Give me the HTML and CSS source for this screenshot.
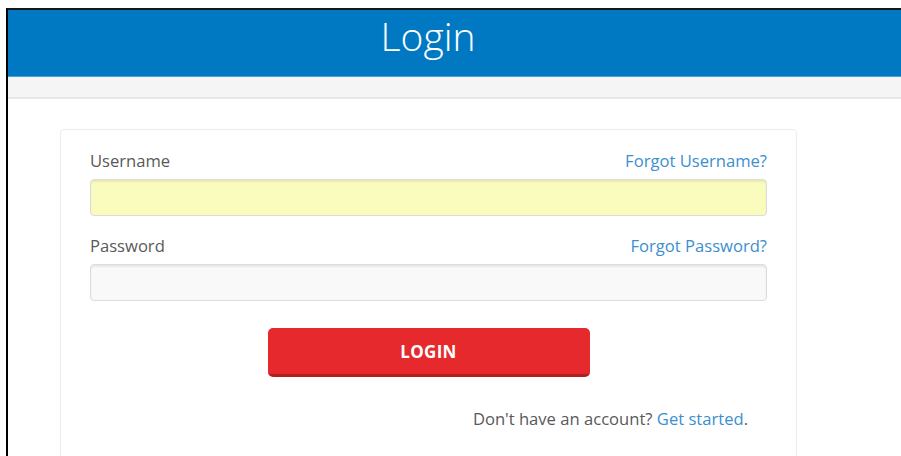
FILE: index.html
```html
<!DOCTYPE html>
<html lang="en">
<head>
<meta charset="utf-8">
<title>Login</title>
<link rel="stylesheet" href="styles.css">
</head>
<body>
<div class="top-gap"></div>
<div class="frame">
  <header class="masthead">
    <div class="masthead-inner"><h1 class="title">Login</h1></div>
  </header>
  <div class="subbar"></div>
  <main class="content">
    <form class="card">
      <div class="field-head">
        <label class="label" for="username">Username</label>
        <a class="link" href="#">Forgot Username?</a>
      </div>
      <input class="input input-autofill" id="username" type="text">
      <div class="field-head field-head-second">
        <label class="label" for="password">Password</label>
        <a class="link" href="#">Forgot Password?</a>
      </div>
      <input class="input" id="password" type="password">
      <div class="actions">
        <button class="btn-login" type="button">LOGIN</button>
      </div>
      <p class="signup">Don't have an account? <a class="link" href="#">Get started</a>.</p>
    </form>
  </main>
</div>
</body>
</html>
```
FILE: styles.css
```css
* { box-sizing: border-box; }

html, body {
  margin: 0;
  padding: 0;
  background: #fff;
  height: 100%;
  overflow: hidden;
}

body {
  font-family: "Open Sans", "Liberation Sans", sans-serif;
  color: #555;
}

.top-gap { height: 8px; }

.frame {
  margin-left: 6px;
  border-left: 2px solid #000;
  border-top: 2px solid #161616;
  height: 448px;
  overflow: hidden;
}

.masthead {
  background: #0079c2;
  height: 67px;
  border-bottom: 1px solid #4a9fd6;
}

.masthead-inner {
  width: 840px;
  text-align: center;
}

.title {
  margin: 0;
  font-weight: 300;
  font-size: 39px;
  line-height: 50px;
  padding-top: 1px;
  color: #fff;
}

.subbar {
  height: 22px;
  background: #f5f5f5;
  border-bottom: 2px solid #e8e8e8;
}

.content {
  padding: 30px 0 0 52px;
}

.card {
  width: 737px;
  height: 340px;
  border: 1px solid #ececec;
  border-radius: 4px;
  padding: 20px 29px 0 29px;
}

.field-head {
  display: flex;
  justify-content: space-between;
  align-items: baseline;
  font-size: 16.6px;
  line-height: 22px;
  margin-bottom: 7px;
}

.field-head-second { margin-top: 19px; }

.label { color: #595959; }

.link {
  color: #3b8fcf;
  text-decoration: none;
}

.input {
  display: block;
  width: 100%;
  height: 37px;
  border: 1px solid #dcdcdc;
  border-radius: 4px;
  background: #f9f9f9;
  box-shadow: inset 0 2px 2px rgba(0, 0, 0, 0.07);
  outline: none;
}

.input-autofill { background: #f9fcbd; }

.actions {
  display: flex;
  justify-content: center;
  margin-top: 27px;
}

.btn-login {
  width: 322px;
  height: 49px;
  border: none;
  border-bottom: 3px solid #b51d20;
  border-radius: 5px;
  background: #e5292c;
  color: #fff;
  font-family: "Open Sans", "Liberation Sans", sans-serif;
  font-weight: 700;
  font-size: 17px;
  letter-spacing: 0.3px;
  padding: 0;
}

.signup {
  margin: 31px 19px 0 0;
  text-align: right;
  font-size: 16.6px;
  line-height: 22px;
  color: #595959;
}
```
